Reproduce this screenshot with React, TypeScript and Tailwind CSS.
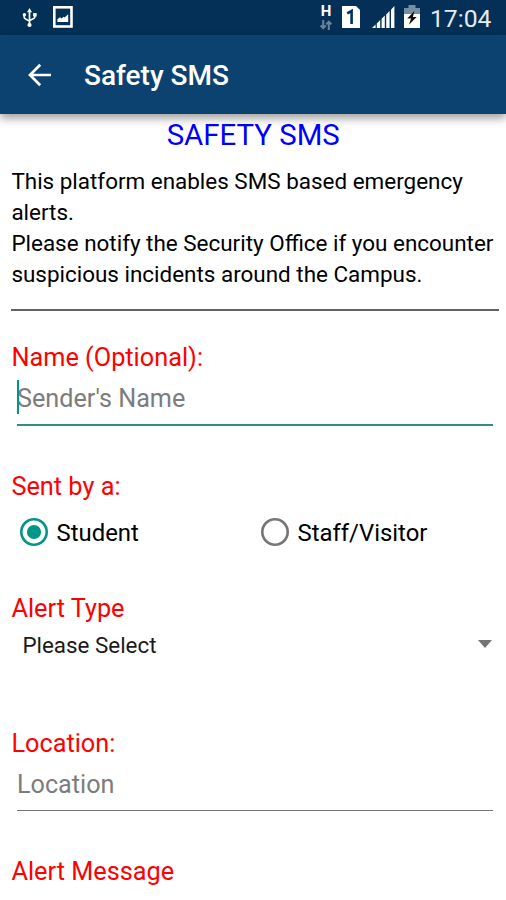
import { useState } from "react"

// ─── Status bar ───────────────────────────────────────────────────────────────

function UsbIcon() {
  return (
    <svg width="16" height="20" viewBox="0 0 16 20" fill="none" stroke="#fff" strokeWidth="1.7">
      <path d="M7.5 3v13M2.2 7v2.6c0 2 5.3 2.2 5.3 4.2M12.8 7.5v1.8c0 2-5.3 2-5.3 4" />
      <path d="M7.5 0 10 4.2H5z" fill="#fff" stroke="none" />
      <circle cx="2.4" cy="6.8" r="1.7" fill="#fff" stroke="none" />
      <path d="M11.1 5.1h3.6v3.4h-3.6z" fill="#fff" stroke="none" />
      <circle cx="7.5" cy="17" r="2.1" fill="#fff" stroke="none" />
    </svg>
  )
}

function PictureIcon() {
  return (
    <svg width="20" height="22" viewBox="0 0 20 22">
      <rect x="1.3" y="1.3" width="17.2" height="19.2" fill="none" stroke="#fff" strokeWidth="2.6" />
      <path d="M4.4 16v-2.8l2.6-2 1.6 1.2 1.8-1.6 1.2.6 3.6-3.2V16z" fill="#fff" />
    </svg>
  )
}

function NetworkIcon() {
  return (
    <div className="flex w-3 flex-col items-center">
      <span className="text-[15px] font-bold leading-[13px] text-white">H</span>
      <svg className="mt-[2px]" width="12" height="10" viewBox="0 0 12 10" fill="none" stroke="#6b8299" strokeWidth="2">
        <path d="M3.2 0v8M.6 5.4l2.6 2.8 2.6-2.8M8.8 10V2M6.2 4.4l2.6-2.8 2.6 2.8" />
      </svg>
    </div>
  )
}

function SimIcon() {
  return (
    <svg width="18" height="22" viewBox="0 0 18 22">
      <path d="M0 0h14L18 4V22H0z" fill="#fff" />
      <path d="M5.2 7.4 9.6 5v13" fill="none" stroke="#04315a" strokeWidth="2.6" />
    </svg>
  )
}

function SignalIcon() {
  return (
    <svg width="23" height="22" viewBox="0 0 23 22" fill="#fff">
      <path d="M0 22l3.6-3.6V22zM4.8 17.4 8.2 14v8H4.8zM9.6 12.8l3.2-3.2V22H9.6zM14.2 8.4l3.4-3.4v17h-3.4zM19 3.8 22.4 0v22H19z" />
    </svg>
  )
}

function BatteryIcon() {
  return (
    <svg width="16" height="23" viewBox="0 0 16 23">
      <path d="M4.5 0h7v3H16v6H0V3h4.5z" fill="#768da3" />
      <path d="M0 9h16v14H0z" fill="#fff" />
      <path d="M10.4 6 3.2 13.4h3.9l-2.2 6.3 7.8-7.7H8.9z" fill="#101010" />
    </svg>
  )
}

function StatusBar() {
  return (
    <div className="flex h-[35px] items-start bg-[#043057]">
      <div className="ml-[22px] mt-[8px]">
        <UsbIcon />
      </div>
      <div className="ml-[15px] mt-[6px]">
        <PictureIcon />
      </div>
      <div className="ml-auto mt-[5px]">
        <NetworkIcon />
      </div>
      <div className="ml-[10px] mt-[6px]">
        <SimIcon />
      </div>
      <div className="ml-[12px] mt-[6px]">
        <SignalIcon />
      </div>
      <div className="ml-[9px] mt-[5px]">
        <BatteryIcon />
      </div>
      <span className="ml-[10px] mr-[14px] mt-[4px] w-[62px] text-[24.7px] leading-[30px] text-[#e6ebef]">17:04</span>
    </div>
  )
}

// ─── App bar ──────────────────────────────────────────────────────────────────

function AppBar() {
  return (
    <header className="relative flex h-[79px] items-center bg-[#0c426f] shadow-[0_4px_9px_rgba(0,0,0,0.4)]">
      <button className="ml-[28px]" aria-label="Back">
        <svg width="24" height="24" viewBox="0 0 24 24" fill="none" stroke="#fff" strokeWidth="2.7">
          <path d="M23 12H3M12.2 1.7 2 12l10.2 10.3" />
        </svg>
      </button>
      <h1 className="ml-[32px] mt-[2px] text-[28px] font-medium leading-[34px] text-white">Safety SMS</h1>
    </header>
  )
}

// ─── Form parts ───────────────────────────────────────────────────────────────

function FieldLabel({ text }: { text: string }) {
  return <div className="text-[25.3px] leading-[30px] text-[#ff0000]">{text}</div>
}

interface RadioProps {
  label: string
  checked: boolean
  onSelect: () => void
}

function Radio({ label, checked, onSelect }: RadioProps) {
  return (
    <button className="flex w-[241px] shrink-0 items-center" role="radio" aria-checked={checked} onClick={onSelect}>
      <svg width="28" height="28" viewBox="0 0 28 28">
        <circle cx="14" cy="14" r="12.7" fill="none" stroke={checked ? "#009688" : "#757575"} strokeWidth="2.6" />
        {checked && <circle cx="14" cy="14" r="7.1" fill="#009688" />}
      </svg>
      <span className="ml-[8.5px] mt-[2px] text-[23.9px] leading-[30px] text-black">{label}</span>
    </button>
  )
}

export default function App() {
  const [sender, setSender] = useState("student")
  const [name, setName] = useState("")
  const [location, setLocation] = useState("")

  return (
    <div className="h-[900px] w-[506px] overflow-hidden bg-white font-['Roboto',sans-serif]">
      <StatusBar />
      <AppBar />

      <main className="pl-[11.4px] pr-[7px] pt-[4px]">
        <h2 className="mr-[4px] text-center text-[29.4px] leading-[34px] text-[#0000ff]">SAFETY SMS</h2>
        <p className="mt-[14px] whitespace-nowrap text-[22.45px] leading-[31px] text-black">
          This platform enables SMS based emergency
          <br />
          alerts.
          <br />
          Please notify the Security Office if you encounter
          <br />
          suspicious incidents around the Campus.
        </p>
        <div className="mt-[19px] h-[2px] bg-[#666164]" />

        {/* Name */}
        <div className="mt-[32px]">
          <FieldLabel text="Name (Optional):" />
          <div className="relative ml-[5.6px] mr-[6px] mt-[11px] border-b-2 border-[#2f8f85] pb-[10px]">
            <input
              className="block h-[30px] w-full text-[25.2px] leading-[30px] placeholder-[#7c7c7c] caret-[#009688] outline-none"
              placeholder="Sender's Name"
              value={name}
              onChange={(e) => setName(e.target.value)}
            />
            <span className="absolute left-0 top-[-4px] h-[34px] w-[2px] bg-[#009688]" />
          </div>
        </div>

        {/* Sender type */}
        <div className="mt-[46px]">
          <FieldLabel text="Sent by a:" />
          <div className="ml-[8.6px] mt-[14px] flex" role="radiogroup">
            <Radio label="Student" checked={sender === "student"} onSelect={() => setSender("student")} />
            <Radio label="Staff/Visitor" checked={sender === "staff"} onSelect={() => setSender("staff")} />
          </div>
        </div>

        {/* Alert type */}
        <div className="mt-[46px]">
          <FieldLabel text="Alert Type" />
          <button className="mt-[6px] flex w-full items-center justify-between pl-[11px] pr-[7px]">
            <span className="text-[22.4px] leading-[30px] text-[#1a1a1a]">Please Select</span>
            <svg className="mb-[2px]" width="14" height="8" viewBox="0 0 14 8">
              <path d="M0 0h14L7 8z" fill="#757575" />
            </svg>
          </button>
        </div>

        {/* Location */}
        <div className="mt-[69px]">
          <FieldLabel text="Location:" />
          <div className="ml-[5.6px] mr-[6px] mt-[11px] border-b border-[#757575] pb-[10px]">
            <input
              className="block h-[30px] w-full text-[25.2px] leading-[30px] placeholder-[#7c7c7c] outline-none"
              placeholder="Location"
              value={location}
              onChange={(e) => setLocation(e.target.value)}
            />
          </div>
        </div>

        {/* Message */}
        <div className="mt-[46px]">
          <FieldLabel text="Alert Message" />
        </div>
      </main>
    </div>
  )
}
